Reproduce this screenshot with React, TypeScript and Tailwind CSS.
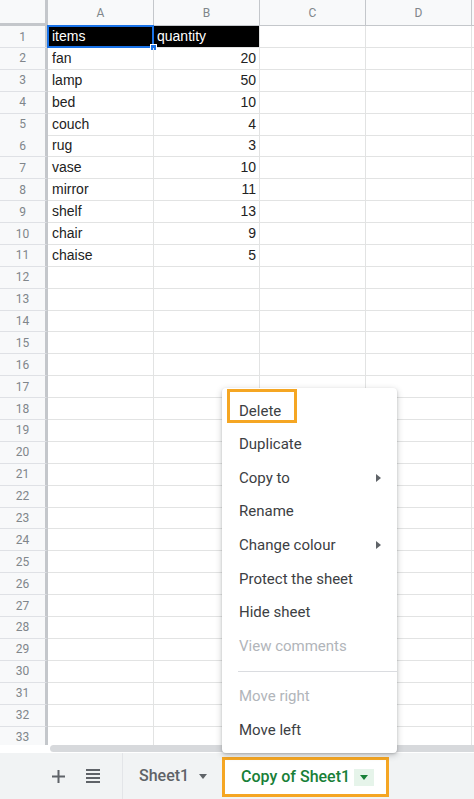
const COLS = ["A", "B", "C", "D"];

const DATA: [string, string][] = [
  ["items", "quantity"],
  ["fan", "20"],
  ["lamp", "50"],
  ["bed", "10"],
  ["couch", "4"],
  ["rug", "3"],
  ["vase", "10"],
  ["mirror", "11"],
  ["shelf", "13"],
  ["chair", "9"],
  ["chaise", "5"],
];

const MENU = [
  { label: "Delete", boxed: true },
  { label: "Duplicate" },
  { label: "Copy to", sub: true },
  { label: "Rename" },
  { label: "Change colour", sub: true },
  { label: "Protect the sheet" },
  { label: "Hide sheet" },
  { label: "View comments", disabled: true },
  { sep: true },
  { label: "Move right", disabled: true },
  { label: "Move left" },
];

function Caret({ className }: { className?: string }) {
  return (
    <svg width="8" height="5" viewBox="0 0 8 5" className={className}>
      <path d="M0 0h8L4 5z" fill="currentColor" />
    </svg>
  );
}

function SubArrow() {
  return (
    <svg width="5" height="8" viewBox="0 0 5 8" className="text-[#5f6368]">
      <path d="M0 0v8l5-4z" fill="currentColor" />
    </svg>
  );
}

function Grid() {
  const rows = Array.from({ length: 33 }, (_, i) => i + 1);
  return (
    <div className="h-[745px] overflow-hidden bg-white">
      <div className="grid grid-cols-[48px_106px_106px_106px_106px_1fr] h-[26px]">
        <div className="bg-[#f8f9fa] border-r-[3px] border-b-[3px] border-[#c4c7cb]" />
        {COLS.map((c) => (
          <div
            key={c}
            className="bg-[#f8f9fa] border-r border-b border-[#c4c7cb] flex items-center justify-center text-[12px] text-[#80868b] font-['Roboto',sans-serif]"
          >
            {c}
          </div>
        ))}
        <div className="bg-[#f8f9fa] border-b border-[#c4c7cb]" />
      </div>
      {rows.map((r) => {
        const d = DATA[r - 1];
        const head = r === 1;
        return (
          <div key={r} className="grid grid-cols-[48px_106px_106px_106px_106px_1fr] h-[21.9px]">
            <div className="bg-[#f8f9fa] border-r-[3px] border-b border-r-[#c4c7cb] border-b-[#dfe1e5] flex items-center justify-center text-[12px] text-[#80868b] font-['Roboto',sans-serif]">
              {r}
            </div>
            <div
              className={`relative border-r border-b border-[#e2e3e3] flex items-center pl-[4px] text-[14px] font-['Liberation_Sans',Arial,sans-serif] ${
                head ? "bg-black text-white" : "text-[#222]"
              }`}
            >
              {d ? d[0] : ""}
              {head && (
                <>
                  <div className="absolute inset-[-1px] border-2 border-[#1a73e8]" />
                  <div className="absolute right-[-4px] bottom-[-4px] w-[7px] h-[7px] bg-[#1a73e8] border border-white" />
                </>
              )}
            </div>
            <div
              className={`border-r border-b border-[#e2e3e3] flex items-center pl-[3px] pr-[3px] text-[14px] font-['Liberation_Sans',Arial,sans-serif] ${
                head ? "bg-black text-white justify-start" : "text-[#222] justify-end"
              }`}
            >
              {d ? d[1] : ""}
            </div>
            <div className="border-r border-b border-[#e2e3e3]" />
            <div className="border-r border-b border-[#e2e3e3]" />
            <div className="border-b border-[#e2e3e3]" />
          </div>
        );
      })}
    </div>
  );
}

function Menu() {
  return (
    <div className="absolute left-[222px] top-[388px] w-[175px] bg-white rounded-[4px] shadow-[0_2px_6px_rgba(60,64,67,0.3),0_1px_2px_rgba(60,64,67,0.2)] py-[6px] font-['Roboto',sans-serif] text-[15px]">
      {MENU.map((m, i) =>
        m.sep ? (
          <div key={i} className="py-[8px] pl-[16px] pr-[0px]">
            <div className="h-px bg-[#dadce0]" />
          </div>
        ) : (
          <div key={i} className="relative h-[33.6px] flex items-center pl-[17px] pr-[16px]">
            {m.boxed && (
              <div className="absolute left-[5px] top-[-5px] w-[70px] h-[34px] border-[3px] border-[#f5a623]" />
            )}
            <span className={m.disabled ? "text-[#b1b5ba]" : "text-[#3c4043]"}>{m.label}</span>
            {m.sub && (
              <span className="ml-auto">
                <SubArrow />
              </span>
            )}
          </div>
        )
      )}
    </div>
  );
}

function BottomBar() {
  return (
    <div className="h-[46px] bg-[#f1f3f4] flex items-end font-['Roboto',sans-serif]">
      <div className="w-[122px] h-full flex items-center pl-[52px] gap-[21px] text-[#5f6368]">
        <svg width="13" height="13" viewBox="0 0 13 13">
          <path d="M5.5 0h2v5.5H13v2H7.5V13h-2V7.5H0v-2h5.5z" fill="currentColor" />
        </svg>
        <svg width="14" height="14" viewBox="0 0 14 14">
          <rect x="0" y="0" width="14" height="2" fill="currentColor" />
          <rect x="0" y="4" width="14" height="2" fill="currentColor" />
          <rect x="0" y="8" width="14" height="2" fill="currentColor" />
          <rect x="0" y="12" width="14" height="2" fill="currentColor" />
        </svg>
      </div>
      <div className="w-[100px] h-full flex items-center pl-[16px] gap-[10px] text-[#5f6368] border-l border-[#e3e5e8]">
        <span className="text-[16px] font-medium">Sheet1</span>
        <Caret className="mt-[1px]" />
      </div>
      <div className="w-[167px] h-[40px] mb-[2px] bg-white border-[3px] border-[#f5a623] flex items-center pl-[16px] gap-[4px] text-[#188038]">
        <span className="text-[16px] font-medium">Copy of Sheet1</span>
        <span className="w-[20px] h-[17px] bg-[#e6f4ea] flex items-center justify-center">
          <Caret />
        </span>
      </div>
    </div>
  );
}

export default function App() {
  return (
    <div className="relative w-[474px] h-[799px] overflow-hidden bg-white">
      <Grid />
      <div className="h-[8px] bg-white flex pl-[50px]">
        <div className="flex-1 h-[7px] rounded-l-full bg-[#d7d9dc]" />
      </div>
      <BottomBar />
      <Menu />
    </div>
  );
}
